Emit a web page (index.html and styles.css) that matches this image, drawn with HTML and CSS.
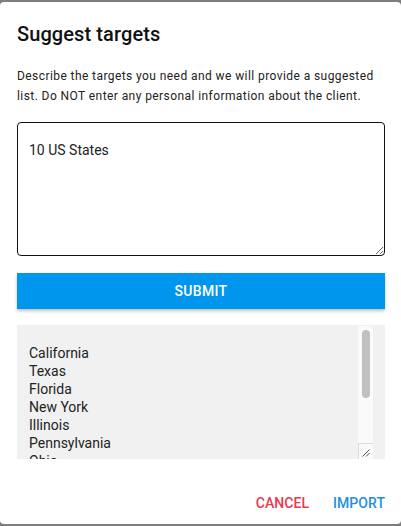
FILE: index.html
```html
<!DOCTYPE html>
<html>
<head>
<meta charset="utf-8">
<link rel="stylesheet" href="styles.css">
</head>
<body>
<div class="dialog">
  <h2 class="title">Suggest targets</h2>
  <div class="content">
    <p class="desc">Describe the targets you need and we will provide a suggested list. Do NOT enter any personal information about the client.</p>
    <div class="field">
      <textarea class="prompt">10 US States</textarea>
    </div>
    <button class="submit">SUBMIT</button>
    <div class="result">
      <textarea class="result-text" readonly>California
Texas
Florida
New York
Illinois
Pennsylvania
Ohio
Georgia
North Carolina
Michigan</textarea>
      <div class="scrollbar"><div class="thumb"></div></div>
      <div class="resizer">
        <svg width="15" height="16" viewBox="0 0 15 16">
          <path d="M4.5 13.5 L11.5 6.5 M8 13.5 L11.5 10" stroke="#555" stroke-width="1" fill="none"/>
        </svg>
      </div>
    </div>
  </div>
  <div class="actions">
    <button class="action cancel">CANCEL</button>
    <button class="action import">IMPORT</button>
  </div>
</div>
</body>
</html>
```
FILE: styles.css
```css
html, body {
  margin: 0;
  padding: 0;
  background: #7d7d7d;
  font-family: Roboto, "Liberation Sans", sans-serif;
}
.dialog {
  margin-top: 2px;
  height: 522px;
  background: #ffffff;
  border-radius: 4px;
  display: flex;
  flex-direction: column;
  overflow: hidden;
}
.title {
  margin: 0;
  padding: 16px 16px 0 17px;
  font-size: 20px;
  font-weight: 500;
  line-height: 32px;
  color: #111111;
  letter-spacing: 0.1px;
}
.content {
  padding: 0 16px 0 17px;
  display: flex;
  flex-direction: column;
}
.desc {
  margin: 16px 0 0;
  font-size: 12px;
  line-height: 20px;
  color: #222222;
  letter-spacing: 0.42px;
}
.field {
  margin-top: 16px;
}
.prompt {
  display: block;
  box-sizing: border-box;
  width: 100%;
  height: 134px;
  margin: 0;
  border: 1px solid #111111;
  border-radius: 4px;
  padding: 18px 11px;
  font-family: Roboto, "Liberation Sans", sans-serif;
  font-size: 14px;
  line-height: 18px;
  color: #222222;
  background: #ffffff;
  outline: none;
  resize: vertical;
}
.submit {
  margin-top: 17px;
  height: 36px;
  border: none;
  border-radius: 0;
  background: #0096ee;
  color: #ffffff;
  font-family: Roboto, "Liberation Sans", sans-serif;
  font-size: 14px;
  font-weight: 500;
  letter-spacing: 0.3px;
  box-shadow: 0 2px 3px rgba(0, 0, 0, 0.25);
  padding: 0;
}
.result {
  position: relative;
  margin-top: 16px;
  background: #f1f1f1;
  padding: 0 12px;
  height: 134px;
}
.result-text {
  display: block;
  box-sizing: border-box;
  width: 100%;
  height: 134px;
  margin: 0;
  border: none;
  padding: 19px 16px 0 0;
  background: transparent;
  font-family: Roboto, "Liberation Sans", sans-serif;
  font-size: 14px;
  line-height: 18px;
  color: #222222;
  outline: none;
  resize: none;
  overflow: hidden;
}
.scrollbar {
  position: absolute;
  top: 1px;
  right: 12px;
  width: 15px;
  bottom: 16px;
  background: #fafafa;
}
.thumb {
  position: absolute;
  top: 4px;
  left: 4px;
  width: 8px;
  height: 68px;
  border-radius: 4px;
  background: #c1c1c1;
}
.resizer {
  position: absolute;
  right: 12px;
  bottom: 0;
  width: 15px;
  height: 16px;
  background: #fafafa;
  box-sizing: border-box;
  border-left: 1px solid #dcdcdc;
  border-top: 1px solid #dcdcdc;
}
.resizer svg {
  display: block;
  position: absolute;
  left: -1px;
  top: -1px;
}
.actions {
  margin-top: auto;
  padding: 8px 8px 3px;
  display: flex;
  justify-content: flex-end;
  gap: 8px;
}
.action {
  height: 36px;
  padding: 6px 8px;
  border: none;
  background: transparent;
  font-family: Roboto, "Liberation Sans", sans-serif;
  font-size: 14px;
  font-weight: 500;
  letter-spacing: 0.05px;
}
.cancel {
  color: #e8394f;
}
.import {
  color: #1e8fe0;
}
```
